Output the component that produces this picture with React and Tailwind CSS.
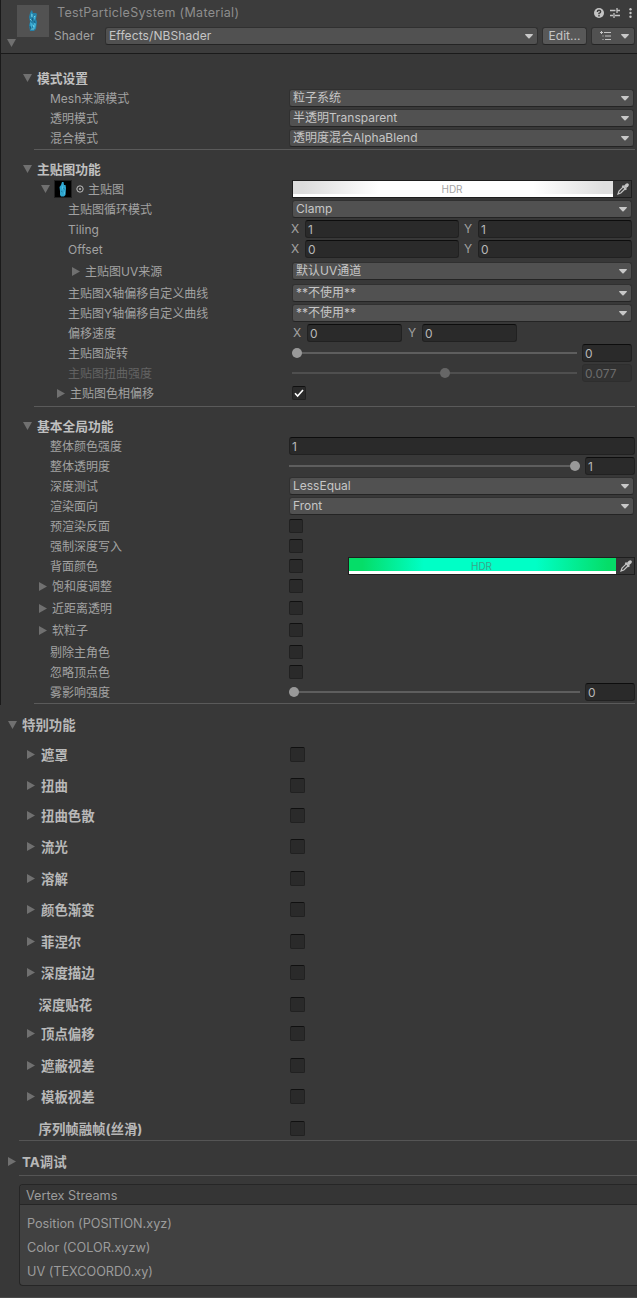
import clsx from 'clsx';

const specialFeatures = [
  { label: '遮罩', fold: true, tight: true },
  { label: '扭曲', fold: true },
  { label: '扭曲色散', fold: true, tight: true },
  { label: '流光', fold: true },
  { label: '溶解', fold: true },
  { label: '颜色渐变', fold: true },
  { label: '菲涅尔', fold: true },
  { label: '深度描边', fold: true },
  { label: '深度贴花' },
  { label: '顶点偏移', fold: true, tight: true },
  { label: '遮蔽视差', fold: true },
  { label: '模板视差', fold: true },
  { label: '序列帧融帧(丝滑)' },
];

const vertexStreams = ['Position (POSITION.xyz)', 'Color (COLOR.xyzw)', 'UV (TEXCOORD0.xy)'];

function Fold({ open, className }) {
  return open ? (
    <svg viewBox="0 0 9 8" className={clsx('w-[9px] h-2 shrink-0 fill-[#707070]', className)}>
      <path d="M0 0h9L4.500 8z" />
    </svg>
  ) : (
    <svg viewBox="0 0 8 9" className={clsx('w-2 h-[9px] shrink-0 fill-[#707070]', className)}>
      <path d="M0 0v9l8-4.500z" />
    </svg>
  );
}

function Caret() {
  return (
    <svg viewBox="0 0 8 5" className="w-2 h-[5px] shrink-0 fill-[#c8c8c8]">
      <path d="M.6 0h6.800q.9.200.3.900L4.600 4.300q-.6.500-1.200 0L.3.900Q-.3.200.6 0z" />
    </svg>
  );
}

function Dropdown({ value, className }) {
  return (
    <div className={clsx('flex h-[18px] items-center justify-between rounded-[3px] border border-[#303030] border-b-[#242424] bg-[#515151] pl-[3px] pr-1 text-[#c6c6c6]', className)}>
      <span>{value}</span>
      <Caret />
    </div>
  );
}

function Field({ value, disabled, className }) {
  return (
    <div
      className={clsx(
        'flex h-[18px] shrink-0 items-center rounded-[3px] border pl-[2px]',
        disabled ? 'border-[#2e2e2e] bg-[#323232] text-[#6c6c6c]' : 'border-[#212121] border-t-[#0d0d0d] bg-[#2a2a2a] text-[#b8b8b8]',
        className
      )}
    >
      <span className="pt-px">{value}</span>
    </div>
  );
}

function Checkbox({ checked, large }) {
  return (
    <span
      className={clsx(
        'flex shrink-0 items-center justify-center rounded-[2px] border border-[#212121] border-t-[#101010] bg-[#2a2a2a]',
        large ? 'size-[15px]' : 'size-[14px]'
      )}
    >
      {checked && (
        <svg viewBox="0 0 10 10" className="size-[10px] fill-none stroke-white stroke-[1.6]">
          <path d="M1 5.300 3.600 8 9 2" />
        </svg>
      )}
    </span>
  );
}

function Slider({ at, disabled, className }) {
  return (
    <div className={clsx('relative h-[10px] shrink-0', className)}>
      <div className={clsx('mt-1 h-[2px]', disabled ? 'bg-[#4f4f4f]' : 'bg-[#5e5e5e]')} />
      <span
        className={clsx('absolute top-0 size-[10px] rounded-full', disabled ? 'bg-[#666666]' : 'bg-[#999999]')}
        style={{ left: `calc(${at * 100}% - ${at * 10}px)` }}
      />
    </div>
  );
}

function Eyedropper() {
  return (
    <svg viewBox="0 0 12 12" className="ml-px size-3">
      <path d="M6.800 3.400 2 8.200 1 11l2.800-1 4.900-4.800" fill="none" stroke="#c4c4c4" strokeWidth="1.200" />
      <path d="m5.400 2.700 3.900 3.900" stroke="#c4c4c4" strokeWidth="1.900" />
      <path d="m6.800 3 2.100-2.200q1.500-1.200 2.500-.1t-.1 2.500L9 5.200z" fill="#c4c4c4" />
    </svg>
  );
}

function HdrColor({ green, className }) {
  return (
    <div className={clsx('flex h-[18px] border border-[#1e1e1e]', className)}>
      <div className="flex flex-1 flex-col">
        <div
          className={clsx(
            'flex h-[13px] items-center justify-center text-[10px]',
            green
              ? 'bg-[linear-gradient(90deg,#05dd68_5%,#00ffc6_28%,#00ffc6_70%,#05dd68_97%)] text-[#3aa68a]'
              : 'bg-[linear-gradient(90deg,#dcdcdc_3%,#ffffff_27%,#ffffff_75%,#dedede_97%)] text-[#a4a4a4]'
          )}
        >
          <span className="pr-[2px] pt-[3px]">HDR</span>
        </div>
        <div className="h-[3px] bg-white" />
      </div>
      <div className="flex w-[18px] items-center justify-center">
        <Eyedropper />
      </div>
    </div>
  );
}

function Row({ label, indent = 'pl-[50px]', fold, disabled, height = 'h-5', children }) {
  return (
    <div className={clsx('flex items-center', height)}>
      <div className={clsx('flex w-[289px] shrink-0 items-center', indent, disabled ? 'text-[#636363]' : 'text-[#a2a2a2]')}>
        {fold && <Fold className="mr-[5px]" />}
        <span className="pt-px">{label}</span>
      </div>
      {children}
    </div>
  );
}

function SectionTitle({ children }) {
  return (
    <div className="flex h-5 items-center pl-[23px] text-[12.75px] font-bold text-[#c0c0c0]">
      <Fold open className="mr-[5px]" />
      <span className="pt-[2px]">{children}</span>
    </div>
  );
}

function Divider() {
  return <div className="mt-px ml-[34px] mr-[2px] h-px bg-[#5a5a5a]" />;
}

function Vector({ x, y, narrow }) {
  const width = narrow ? 'w-[95px]' : 'w-[154px]';
  return (
    <div className={clsx('flex items-center text-[#a2a2a2]', narrow ? 'pl-[4px]' : 'pl-[2px]')}>
      <span className="w-[14px]">X</span>
      <Field value={x} className={width} />
      <span className={clsx('w-[14px]', narrow ? 'ml-[6px]' : 'ml-[5px]')}>Y</span>
      <Field value={y} className={width} />
    </div>
  );
}

// ice crystal in the material preview
function Crystal() {
  return (
    <svg viewBox="0 0 10 22" className="h-[22px] w-[10px]">
      <path d="M3 1l1-1 1 3 3 0 1 1-1 5 1 3-1 7-2 2H2l-1-6 1-3-1-5 1-4z" fill="#2581a8" />
      <path d="M3 2l1 3-1 3zM5 8l3-3-1 5zM2 12l3 2-2 5zM6 12l2 2-1 5-2-1z" fill="#3fb0d6" />
      <path d="M2 9l2 2M6 6l1 1M5 15l1 2M4 4v3M3 19h3" stroke="#7ad8ea" strokeWidth=".9" />
      <path d="M4 11l1-3M6 11l1 2M2 16l1 3" stroke="#155a7c" strokeWidth=".9" />
    </svg>
  );
}

function CrystalThumb() {
  return (
    <svg viewBox="0 0 8 15" className="h-[15px] w-2">
      <path d="M3 0h1.500L5 3h1.500L7 6l-.5 7L5 14.500H2L1 13V9L.5 5 2 3z" fill="#2fa6cf" />
      <path d="M3 3l1 3-1 2zM5 9l1 2-1 2z" fill="#56c8ea" />
      <path d="M2 9l1.500 1M4.500 6l1 1.500" stroke="#1b6f94" strokeWidth=".8" />
    </svg>
  );
}

function Header() {
  return (
    <header className="flex h-[54px] border-b border-[#1a1a1a] bg-[#3c3c3c] shadow-[inset_1px_0_0_#1a1a1a]">
      <div className="flex w-[17px] shrink-0 items-start pl-[7px] pt-[39px]">
        <Fold open />
      </div>
      <div className="mt-[5px] flex size-8 shrink-0 items-center justify-center bg-[#525252]">
        <Crystal />
      </div>
      <div className="flex flex-1 flex-col pr-[2px]">
        <div className="flex h-[25px] items-center justify-between pl-2">
          <h1 className="text-[12.500px] tracking-[0.3px] text-[#8e8e8e]">TestParticleSystem (Material)</h1>
          <div className="flex items-center">
            <svg viewBox="0 0 10 10" className="size-[10px]">
              <circle cx="5" cy="5" r="5" fill="#c4c4c4" />
              <path d="M3.300 4Q3.400 2.300 5 2.300t1.700 1.500Q6.700 4.600 5 5.300v.9M5 7.100v1.300" fill="none" stroke="#3c3c3c" strokeWidth="1.400" />
            </svg>
            <svg viewBox="0 0 10 10" className="ml-[6px] size-[10px] fill-none stroke-[#c4c4c4] stroke-[1.3]">
              <path d="M0 2.500h5.500M7 2.500h3M7 0v5M0 7.500h3M5 7.500h5M4 5v5" />
            </svg>
            <svg viewBox="0 0 3 10" className="ml-[9px] mr-[3px] h-[10px] w-[3px] fill-[#c4c4c4]">
              <circle cx="1.500" cy="1.300" r="1.200" />
              <circle cx="1.500" cy="5" r="1.200" />
              <circle cx="1.500" cy="8.700" r="1.200" />
            </svg>
          </div>
        </div>
        <div className="flex h-[22px] items-center pl-[5px]">
          <span className="w-[51px] text-[#a2a2a2]">Shader</span>
          <Dropdown value="Effects/NBShader" className="w-[433px] tracking-[0.1px]" />
          <div className="ml-[4px] flex h-[18px] w-[45px] items-center justify-center rounded-[3px] border border-[#303030] border-b-[#242424] bg-[#585858] text-[#c6c6c6]">
            Edit...
          </div>
          <div className="ml-[4px] flex h-[18px] flex-1 items-center justify-between rounded-[3px] border border-[#303030] border-b-[#242424] bg-[#515151] pl-2 pr-[5px]">
            <svg viewBox="0 0 12 10" className="h-[10px] w-3 fill-none stroke-[#c4c4c4] stroke-1">
              <path d="M4 1.500h7M5 5h6M5 8.500h6M2.500 5h1M2.500 8.500h1M0 1.500h3M1.500 0v3" />
            </svg>
            <Caret />
          </div>
        </div>
      </div>
    </header>
  );
}

export default function App() {
  return (
    <div className="h-[1298px] w-[637px] overflow-hidden border-b border-[#4a4a4a] bg-[#383838] font-['Inter','Noto_Sans_CJK_SC',sans-serif] text-[12px] leading-[18px] whitespace-nowrap">
      <Header />
      <main>
        <div className="h-[651px] pt-[14px] shadow-[inset_1px_0_0_#1a1a1a]">
          <section>
            <SectionTitle>模式设置</SectionTitle>
            <Row label="Mesh来源模式">
              <Dropdown value="粒子系统" className="w-[345px]" />
            </Row>
            <Row label="透明模式">
              <Dropdown value="半透明Transparent" className="w-[345px]" />
            </Row>
            <Row label="混合模式">
              <Dropdown value="透明度混合AlphaBlend" className="w-[345px]" />
            </Row>
            <Divider />
          </section>

          <section className="pt-[9px]">
            <SectionTitle>主贴图功能</SectionTitle>
            <div className="flex h-5 items-center">
              <div className="flex w-[292px] shrink-0 items-center pl-[41px] text-[#a2a2a2]">
                <Fold open />
                <div className="ml-[4px] flex h-[18px] w-[18px] items-center justify-center border border-[#202020] bg-black">
                  <CrystalThumb />
                </div>
                <svg viewBox="0 0 8 8" className="mx-[4px] size-2">
                  <circle cx="4" cy="4" r="3.200" fill="none" stroke="#bdbdbd" />
                  <circle cx="4" cy="4" r="1" fill="#bdbdbd" />
                </svg>
                <span className="pt-px">主贴图</span>
              </div>
              <HdrColor className="w-[340px]" />
            </div>
            <Row label="主贴图循环模式" indent="pl-[68px]">
              <Dropdown value="Clamp" className="ml-[3px] w-[340px]" />
            </Row>
            <Row label="Tiling" indent="pl-[68px]">
              <Vector x="1" y="1" />
            </Row>
            <Row label="Offset" indent="pl-[68px]">
              <Vector x="0" y="0" />
            </Row>
            <Row label="主贴图UV来源" indent="pl-[72px]" fold height="h-6">
              <Dropdown value="默认UV通道" className="ml-[3px] w-[340px]" />
            </Row>
            <Row label="主贴图X轴偏移自定义曲线" indent="pl-[68px]">
              <Dropdown value="**不使用**" className="ml-[3px] w-[340px]" />
            </Row>
            <Row label="主贴图Y轴偏移自定义曲线" indent="pl-[68px]">
              <Dropdown value="**不使用**" className="ml-[3px] w-[340px]" />
            </Row>
            <Row label="偏移速度" indent="pl-[68px]">
              <Vector x="0" y="0" narrow />
            </Row>
            <Row label="主贴图旋转" indent="pl-[68px]">
              <Slider at={0} className="ml-[3px] w-[285px]" />
              <Field value="0" className="ml-[5px] w-[50px]" />
            </Row>
            <Row label="主贴图扭曲强度" indent="pl-[68px]" disabled>
              <Slider at={0.538} disabled className="ml-[3px] w-[285px]" />
              <Field value="0.077" disabled className="ml-[5px] w-[50px]" />
            </Row>
            <Row label="主贴图色相偏移" indent="pl-[57px]" fold>
              <div className="ml-[3px]">
                <Checkbox checked />
              </div>
            </Row>
            <div className="pt-[2px]">
              <Divider />
            </div>
          </section>

          <section className="pt-[9px]">
            <SectionTitle>基本全局功能</SectionTitle>
            <Row label="整体颜色强度">
              <Field value="1" className="w-[346px]" />
            </Row>
            <Row label="整体透明度">
              <Slider at={1} className="w-[291px]" />
              <Field value="1" className="ml-[5px] w-[50px]" />
            </Row>
            <Row label="深度测试">
              <Dropdown value="LessEqual" className="w-[345px]" />
            </Row>
            <Row label="渲染面向">
              <Dropdown value="Front" className="w-[345px]" />
            </Row>
            <Row label="预渲染反面">
              <Checkbox />
            </Row>
            <Row label="强制深度写入">
              <Checkbox />
            </Row>
            <Row label="背面颜色">
              <Checkbox />
              <HdrColor green className="ml-[45px] w-[287px]" />
            </Row>
            <Row label="饱和度调整" indent="pl-[39px]" fold>
              <Checkbox />
            </Row>
            <Row label="近距离透明" indent="pl-[39px]" fold height="h-6">
              <Checkbox />
            </Row>
            <Row label="软粒子" indent="pl-[39px]" fold>
              <Checkbox />
            </Row>
            <Row label="剔除主角色" height="h-6">
              <Checkbox />
            </Row>
            <Row label="忽略顶点色" height="h-4">
              <Checkbox />
            </Row>
            <Row label="雾影响强度" height="h-6">
              <Slider at={0} className="w-[291px]" />
              <Field value="0" className="ml-[5px] w-[50px]" />
            </Row>
            <div className="-mt-[2px]">
              <Divider />
            </div>
          </section>
        </div>

        <section className="pt-[9.700px] text-[13.400px] font-bold text-[#b8b8b8]">
          <div className="flex h-5 items-center pl-2">
            <Fold open className="mr-[5px]" />
            <span>特别功能</span>
          </div>
          {specialFeatures.map(item => (
            <div key={item.label} className={clsx('flex h-5 items-center', item.tight ? 'mt-[9.500px]' : 'mt-[11.500px]')}>
              <div className={clsx('flex w-[290px] shrink-0 items-center', item.fold ? 'pl-[27px]' : 'pl-[38.500px]')}>
                {item.fold && <Fold className="mr-[6px]" />}
                <span className="pt-px">{item.label}</span>
              </div>
              <Checkbox large />
            </div>
          ))}
          <div className="ml-[19px] mt-[1.800px] h-px bg-[#555555]" />
          <div className="mt-[11px] flex h-5 items-center pl-2">
            <Fold className="mr-[6px]" />
            <span>TA调试</span>
          </div>
          <div className="ml-[19px] mt-[3px] h-px bg-[#555555]" />
        </section>

        <section className="ml-[19px] mt-2 h-[102px] rounded-l-[4px] border border-r-0 border-[#262626] bg-[#414141] text-[12.700px] text-[#9c9c9c]">
          <div className="h-5 rounded-tl-[3px] border-b border-[#262626] bg-[#353535] pl-[6px] leading-[21px]">Vertex Streams</div>
          <ul className="pl-[7px] pt-[7px] tracking-[-0.03px]">
            {vertexStreams.map(stream => (
              <li key={stream} className="h-6 leading-6">{stream}</li>
            ))}
          </ul>
        </section>
      </main>
    </div>
  );
}
